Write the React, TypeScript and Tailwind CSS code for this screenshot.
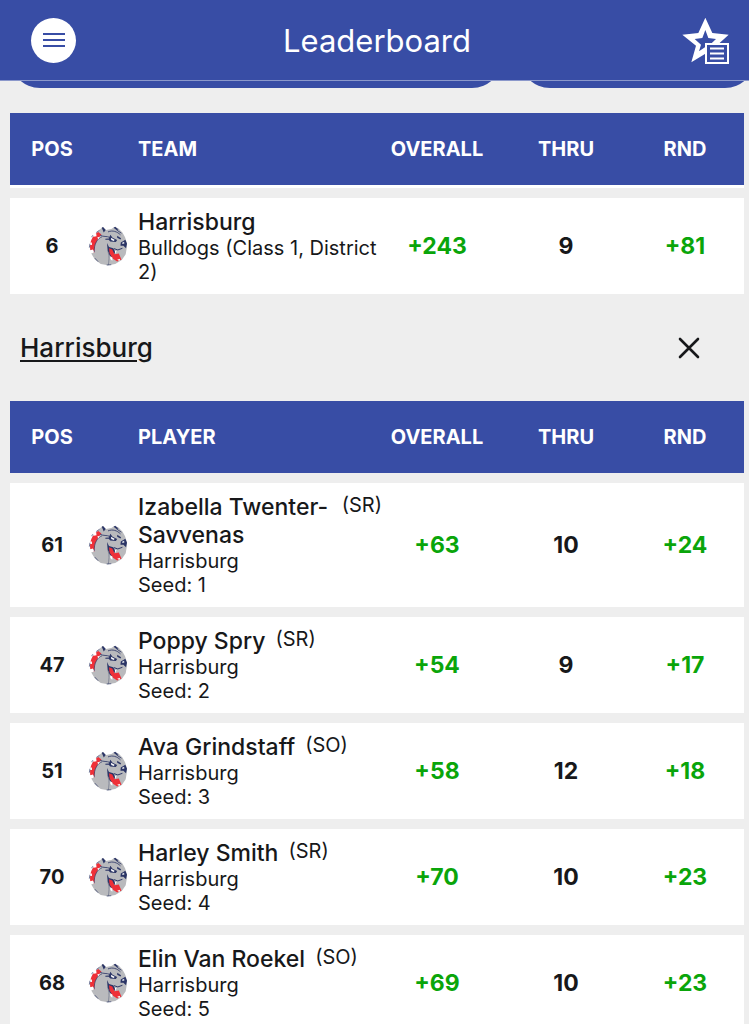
import { useState } from "react"

type Row = {
  pos: number
  name: string
  grade?: string
  details: string[]
  overall: string
  thru: number
  rnd: string
}

const teams: Row[] = [
  {
    pos: 6,
    name: "Harrisburg",
    details: ["Bulldogs (Class 1, District 2)"],
    overall: "+243",
    thru: 9,
    rnd: "+81",
  },
]

const players: Row[] = [
  { pos: 61, name: "Izabella Twenter-Savvenas", grade: "(SR)", details: ["Harrisburg", "Seed: 1"], overall: "+63", thru: 10, rnd: "+24" },
  { pos: 47, name: "Poppy Spry", grade: "(SR)", details: ["Harrisburg", "Seed: 2"], overall: "+54", thru: 9, rnd: "+17" },
  { pos: 51, name: "Ava Grindstaff", grade: "(SO)", details: ["Harrisburg", "Seed: 3"], overall: "+58", thru: 12, rnd: "+18" },
  { pos: 70, name: "Harley Smith", grade: "(SR)", details: ["Harrisburg", "Seed: 4"], overall: "+70", thru: 10, rnd: "+23" },
  { pos: 68, name: "Elin Van Roekel", grade: "(SO)", details: ["Harrisburg", "Seed: 5"], overall: "+69", thru: 10, rnd: "+23" },
]

function BulldogLogo() {
  return (
    <svg viewBox="0 0 120 122" className="h-10 w-10 shrink-0" aria-hidden="true">
      {/* head and neck */}
      <path d="M36 10 L44 3 L54 12 L70 9 L80 3 L92 8 L104 20 L112 34 L117 50 L117 68 L114 86 L102 104 L82 116 L60 120 L38 116 L20 102 L9 84 L5 60 L12 36 Z" fill="#b9babd" />
      {/* collar */}
      <path d="M30 18 C12 30 3 48 6 74 L18 82 L20 58 L30 38 L40 26 Z" fill="#ee3038" />
      <path d="M13 24 l11 -1 1 8 -9 2z M0 51 l11 -1 0 8 -11 0z M3 75 l11 -3 5 8 -10 4z M27 35 l8 -2 -3 9z" fill="#fff" />
      <path d="M10 34 l4 -6 M3 66 l2 -12 M18 80 C17 54 28 38 42 33 M24 20 l10 -7" fill="none" stroke="#2b3566" strokeWidth="2" />
      {/* ears and forehead */}
      <path d="M41 5 L45 3 L53 12 L47 20 Z M77 5 L82 2 L92 11 L86 12 Z" fill="#2b3566" />
      <path d="M36 28 C46 34 56 30 66 35 M60 18 C74 12 88 17 98 27 M86 12 L101 22" fill="none" stroke="#2b3566" strokeWidth="2.5" />
      {/* brow and eye */}
      <path d="M52 39 L63 38 L67 27 L74 36 L88 43 L84 49 L67 47 L62 42 L52 42 Z" fill="#2b3566" />
      <path d="M69 36 L80 42 L78 46 L70 43 Z" fill="#fff" />
      <path d="M88 30 L100 37 L98 41 L88 36 Z" fill="#2b3566" />
      {/* nose */}
      <path d="M99 50 L113 42 L118 54 L115 68 L107 60 L98 60 Z" fill="#2b3566" />
      <path d="M103 51 l6 -3 1 5 -6 2z" fill="#e3e5ea" />
      {/* mouth */}
      <path d="M57 52 L63 64 L76 68 L82 78 L74 100 L65 90 L59 76 Z" fill="#2b3566" />
      <path d="M63 68 L73 72 L80 86 L93 84 L101 102 L88 108 L74 99 L65 84 Z" fill="#ee3038" />
      <path d="M78 69 L90 73 L104 68" fill="none" stroke="#2b3566" strokeWidth="3" />
      <path d="M80 75 l6 2 -3 8z M67 92 l7 5 -1 9 -6 -5z M88 103 l9 -3 -2 7z" fill="#fff" />
      <path d="M60 78 C66 94 62 108 61 119" fill="none" stroke="#787d91" strokeWidth="2.5" />
      <path d="M20 98 L30 109 M56 119 L70 118" fill="none" stroke="#2b3566" strokeWidth="2" />
    </svg>
  )
}

function FavoritesIcon() {
  return (
    <svg viewBox="0 0 144 144" className="h-12 w-12" aria-hidden="true">
      <path
        fill="#fff"
        fillRule="evenodd"
        d="M70 5 L91 51 L140 56 L103 90 L112 139 L70 113 L28 139 L42 89 L1 56 L49 51 Z M70 42 L61 66 L38 69 L57 86 L51 106 L70 93 L89 106 L84 86 L102 69 L79 66 Z"
      />
      <rect x="72" y="84" width="66" height="57" fill="#384da5" stroke="#fff" strokeWidth="6" />
      <path d="M84 97.5 H126 M84 112.5 H126 M84 127.5 H126" stroke="#fff" strokeWidth="6" />
    </svg>
  )
}

function ScoreTable({ label, rows, underline }: { label: string; rows: Row[]; underline?: boolean }) {
  const th = `bg-[#384da5] text-center text-xl font-bold text-white ${underline ? "h-[75px] border-b-[3px] border-white" : "h-[72px]"}`

  return (
    <table className="w-full table-fixed border-separate border-spacing-x-0 border-spacing-y-[10px]">
      <thead>
        <tr>
          <th scope="col" className={`${th} w-[78px] pl-1.5`}>POS</th>
          <th scope="col" className={th}>
            <span className="block pl-[50px] text-left">{label}</span>
          </th>
          <th scope="col" className={`${th} w-[110px]`}>OVERALL</th>
          <th scope="col" className={`${th} w-[148px]`}>THRU</th>
          <th scope="col" className={`${th} w-[104px] pr-3.5`}>RND</th>
        </tr>
      </thead>
      <tbody>
        {rows.map((row) => (
          <tr key={row.pos} className="bg-white text-center text-[23px] font-bold">
            <td className="pl-1.5 text-xl">{row.pos}</td>
            <td className="py-[10px] text-left font-normal">
              <div className="flex items-center gap-[10px]">
                <BulldogLogo />
                <div>
                  <div className="flex items-start gap-2.5">
                    <span className="text-[23px] leading-7 font-medium">{row.name}</span>
                    {row.grade && <span className="text-xl leading-6">{row.grade}</span>}
                  </div>
                  {row.details.map((line) => (
                    <p key={line} className="text-xl leading-6">{line}</p>
                  ))}
                </div>
              </div>
            </td>
            <td className="text-[#0aa50a]">{row.overall}</td>
            <td>{row.thru}</td>
            <td className="pr-3.5 text-[#0aa50a]">{row.rnd}</td>
          </tr>
        ))}
      </tbody>
    </table>
  )
}

export default function App() {
  const [open, setOpen] = useState(true)

  return (
    <div className="h-screen overflow-hidden bg-[#eeeeee] font-[Inter,sans-serif] text-[#17181a]">
      <header className="flex h-[81px] items-center justify-between border-b border-[#8b98cb] bg-[#384da5] pr-[19px] pl-[31px]">
        <button type="button" aria-label="Menu" className="flex size-[45px] items-center justify-center rounded-full bg-white">
          <svg viewBox="0 0 22 16" className="h-4 w-[22px]" aria-hidden="true">
            <path d="M0 2 H22 M0 8 H22 M0 14 H22" stroke="#384da5" strokeWidth="2" />
          </svg>
        </button>
        <h1 className="pt-0.5 pr-1 text-[31px] leading-10 text-white">Leaderboard</h1>
        <button type="button" aria-label="Favorites">
          <FavoritesIcon />
        </button>
      </header>

      <div className="pr-[5px] pl-[10px]">
        {/* lower edge of the filter pills, scrolled under the header */}
        <div className="flex h-[7px] items-end gap-[18px] overflow-hidden" aria-hidden="true">
          <div className="h-[60px] w-[67%] shrink-0 rounded-full bg-[#384da5]" />
          <div className="h-[60px] w-[32%] shrink-0 rounded-full bg-[#384da5]" />
        </div>

        <main className="pt-[15px]">
          <ScoreTable label="TEAM" rows={teams} underline />

          {open && (
            <section>
              <div className="flex items-center justify-between py-6 pr-11 pl-[10px]">
                <h2 className="text-[26px] leading-[39px] font-medium">
                  <a href="#harrisburg" className="underline decoration-2 underline-offset-3">Harrisburg</a>
                </h2>
                <button type="button" aria-label="Close" onClick={() => setOpen(false)}>
                  <svg viewBox="0 0 22 22" className="size-[22px]" aria-hidden="true">
                    <path d="M2 2 L20 20 M20 2 L2 20" stroke="#17181a" strokeWidth="2.6" strokeLinecap="round" />
                  </svg>
                </button>
              </div>
              <ScoreTable label="PLAYER" rows={players} />
            </section>
          )}
        </main>
      </div>
    </div>
  )
}
